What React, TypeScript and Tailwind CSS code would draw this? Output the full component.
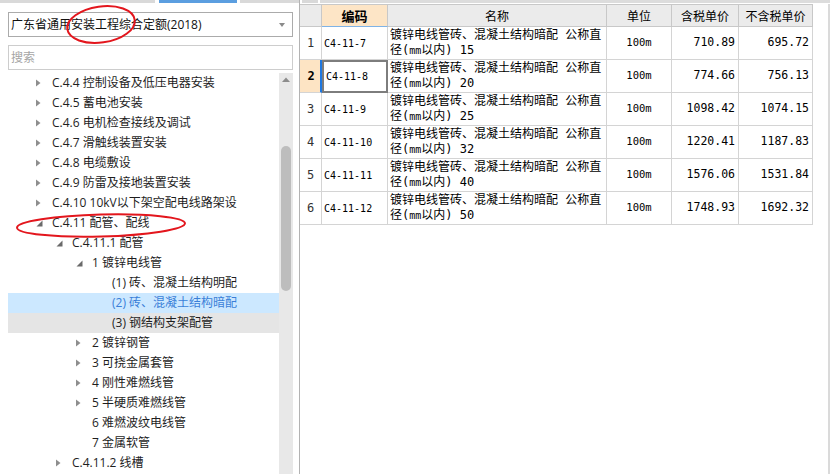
import React from "react";

type Node = { level: 0 | 1 | 2 | 3; arrow: "right" | "down" | "none"; label: string; state?: "sel" | "hover" };

const tree: Node[] = [
  { level: 0, arrow: "right", label: "C.4.4 控制设备及低压电器安装" },
  { level: 0, arrow: "right", label: "C.4.5 蓄电池安装" },
  { level: 0, arrow: "right", label: "C.4.6 电机检查接线及调试" },
  { level: 0, arrow: "right", label: "C.4.7 滑触线装置安装" },
  { level: 0, arrow: "right", label: "C.4.8 电缆敷设" },
  { level: 0, arrow: "right", label: "C.4.9 防雷及接地装置安装" },
  { level: 0, arrow: "right", label: "C.4.10 10kV以下架空配电线路架设" },
  { level: 0, arrow: "down", label: "C.4.11 配管、配线" },
  { level: 1, arrow: "down", label: "C.4.11.1 配管" },
  { level: 2, arrow: "down", label: "1 镀锌电线管" },
  { level: 3, arrow: "none", label: "(1) 砖、混凝土结构明配" },
  { level: 3, arrow: "none", label: "(2) 砖、混凝土结构暗配", state: "sel" },
  { level: 3, arrow: "none", label: "(3) 钢结构支架配管", state: "hover" },
  { level: 2, arrow: "right", label: "2 镀锌钢管" },
  { level: 2, arrow: "right", label: "3 可挠金属套管" },
  { level: 2, arrow: "right", label: "4 刚性难燃线管" },
  { level: 2, arrow: "right", label: "5 半硬质难燃线管" },
  { level: 2, arrow: "none", label: "6 难燃波纹电线管" },
  { level: 2, arrow: "none", label: "7 金属软管" },
  { level: 1, arrow: "right", label: "C.4.11.2 线槽" },
];

const indent = ["pl-[28px]", "pl-[48px]", "pl-[68px]", "pl-[88px]"];

const rows = [
  { code: "C4-11-7", size: "15", tax: "710.89", notax: "695.72" },
  { code: "C4-11-8", size: "20", tax: "774.66", notax: "756.13" },
  { code: "C4-11-9", size: "25", tax: "1098.42", notax: "1074.15" },
  { code: "C4-11-10", size: "32", tax: "1220.41", notax: "1187.83" },
  { code: "C4-11-11", size: "40", tax: "1576.06", notax: "1531.84" },
  { code: "C4-11-12", size: "50", tax: "1748.93", notax: "1692.32" },
];

function Arrow({ kind }: { kind: Node["arrow"] }) {
  return (
    <span className="w-[16px] h-full flex items-center shrink-0">
      {kind === "right" && (
        <svg width="5" height="8" viewBox="0 0 5 8">
          <path d="M0 0.5L4.5 4L0 7.5z" fill="#8e8e8e" />
        </svg>
      )}
      {kind === "down" && (
        <svg width="7" height="7" viewBox="0 0 7 7" className="mt-[1px]">
          <path d="M6.5 0.5L6.5 6.5L0.5 6.5z" fill="#6a6a6a" />
        </svg>
      )}
    </span>
  );
}

const cell = "border-r border-b border-[#d4d4d4]";

export default function App() {
  return (
    <div className="relative w-[835px] h-[474px] overflow-hidden bg-white flex text-[12px] text-[#1e1e1e] font-['Open_Sans','Noto_Sans_CJK_SC',sans-serif]">
      {/* left: quota tree */}
      <div className="w-[300px] h-full flex flex-col border-r border-[#b3b3b3] shrink-0">
        <div className="h-[3px] flex shrink-0">
          <div className="w-[155px] bg-[#d9d9d9]" />
          <div className="w-[4px]" />
          <div className="w-[78px] bg-[#5b9ee0]" />
          <div className="w-[3px]" />
          <div className="flex-1 bg-[#d9d9d9]" />
        </div>
        <div className="pl-2 pr-[6px] pt-[9px] flex flex-col flex-1 min-h-0">
          <div className="h-[25px] border border-[#ababab] flex items-center pl-[2px] pr-[7px] shrink-0">
            <span className="flex-1 text-[#111]">广东省通用安装工程综合定额(2018)</span>
            <svg width="6" height="4" viewBox="0 0 6 4">
              <path d="M0 0L6 0L3 4z" fill="#8a8a8a" />
            </svg>
          </div>
          <div className="mt-2 h-[25px] border border-[#cdcdcd] flex items-center pl-[2px] text-[#a5a5a5] shrink-0">
            搜索
          </div>
          <div className="mt-[3px] flex flex-1 min-h-0">
            <div className="flex-1 overflow-hidden">
              {tree.map((n, i) => (
                <div
                  key={i}
                  className={`h-[20px] flex items-center whitespace-nowrap ${indent[n.level]} ${
                    n.state === "sel" ? "bg-[#cce8ff] text-[#3a7fd8]" : n.state === "hover" ? "bg-[#e5e5e5]" : ""
                  }`}
                >
                  <Arrow kind={n.arrow} />
                  <span>{n.label}</span>
                </div>
              ))}
            </div>
            <div className="w-[14px] bg-[#e8e8e8] flex flex-col items-center">
              <svg width="8" height="5" viewBox="0 0 8 5" className="mt-[4px]">
                <path d="M0 5L4 0.5L8 5z" fill="#8c8c8c" />
              </svg>
              <div className="mt-[64px] w-[10px] h-[145px] rounded-full bg-[#bdbdbd]" />
            </div>
          </div>
        </div>
      </div>

      {/* right: quota item table */}
      <div className="flex-1 flex flex-col text-black font-['DejaVu_Sans_Mono','Noto_Sans_CJK_SC',monospace]">
        <div className="h-[3px] flex shrink-0">
          <div className="w-[2px]" />
          <div className="w-[16px] bg-[#d9d9d9]" />
          <div className="w-[2px]" />
          <div className="w-[510px] bg-[#dcdcdc]" />
        </div>
        <div className="flex flex-1 pt-[1px]">
          <div className="w-[513px] grid grid-cols-[22px_66px_219px_65px_67px_74px] content-start">
            <div className="h-[23px] border-y border-r border-[#c8c8c8] bg-[#ebebeb]" />
            <div className="h-[23px] border-t border-r border-[#c8c8c8] border-b border-b-[#7fb3e6] bg-[#fde5c6] flex items-center justify-center font-bold text-[13px] font-['Noto_Sans_CJK_SC',sans-serif]">
              编码
            </div>
            {["名称", "单位", "含税单价", "不含税单价"].map((h) => (
              <div
                key={h}
                className="h-[23px] border-y border-r border-[#c8c8c8] bg-[#ebebeb] flex items-center justify-center text-[12px] font-['Noto_Sans_CJK_SC',sans-serif]"
              >
                {h}
              </div>
            ))}
            {rows.map((r, i) => {
              const sel = i === 1;
              return (
                <React.Fragment key={r.code}>
                  <div
                    className={`h-[33px] flex items-center justify-center text-[12px] ${
                      sel
                        ? "border-b border-[#d4d4d4] border-r-2 border-r-[#1f78e0] bg-[#fde4c4] font-bold pl-[2px]"
                        : cell + " text-[#333]"
                    }`}
                  >
                    {i + 1}
                  </div>
                  <div
                    className={`h-[33px] flex items-center pl-[2px] text-[10px] ${
                      sel ? "border-2 border-[#7d7d7d] pl-[1px]" : cell
                    }`}
                  >
                    {r.code}
                  </div>
                  <div className={`h-[33px] ${cell} pl-[2px] pt-[1px] leading-[15px] text-[12px] whitespace-nowrap overflow-hidden`}>
                    <div>镀锌电线管砖、混凝土结构暗配 公称直</div>
                    <div>
                      径(<span className="text-[10px]">mm</span>以内) {r.size}
                    </div>
                  </div>
                  <div className={`h-[33px] ${cell} flex items-center justify-center text-[10.5px]`}>100m</div>
                  <div className={`h-[33px] ${cell} flex items-center justify-end pr-[3px] text-[11.5px]`}>{r.tax}</div>
                  <div className={`h-[33px] ${cell} flex items-center justify-end pr-[3px] text-[11.5px]`}>{r.notax}</div>
                </React.Fragment>
              );
            })}
          </div>
          <div className="flex-1" />
          <div className="w-[2px] bg-[#dadada]" />
          <div className="w-[5px]" />
        </div>
      </div>

      {/* red annotation rings */}
      <svg className="absolute inset-0 pointer-events-none" width="835" height="474" viewBox="0 0 835 474">
        <ellipse cx="101" cy="24.5" rx="34" ry="18" fill="none" stroke="#e3161d" strokeWidth="2" transform="rotate(-8 101 24.5)" />
        <ellipse cx="101" cy="225.5" rx="84" ry="11" fill="none" stroke="#e3161d" strokeWidth="2" transform="rotate(-1.5 101 225.5)" />
      </svg>
    </div>
  );
}
